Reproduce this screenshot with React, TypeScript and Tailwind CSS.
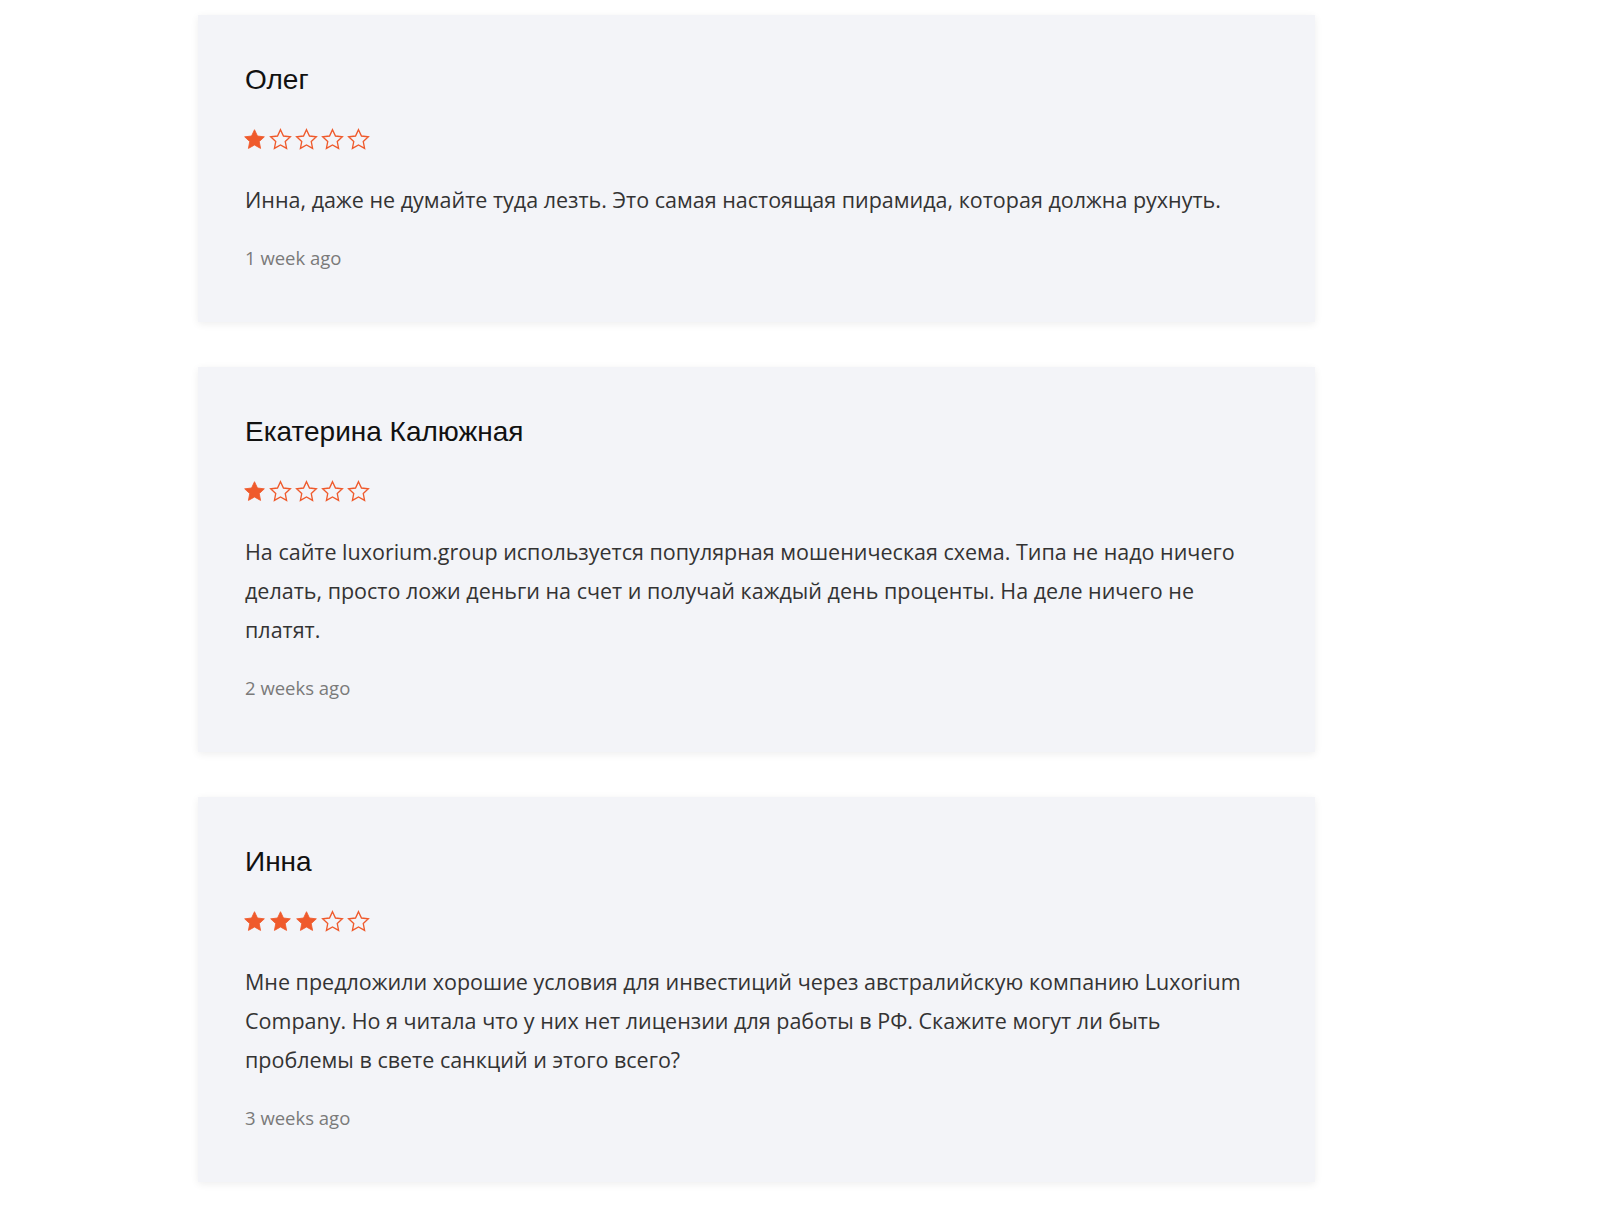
import React from 'react';

type Review = {
  name: string;
  rating: number;
  text: string;
  date: string;
};

const REVIEWS: Review[] = [
  {
    name: 'Олег',
    rating: 1,
    text: 'Инна, даже не думайте туда лезть. Это самая настоящая пирамида, которая должна рухнуть.',
    date: '1 week ago',
  },
  {
    name: 'Екатерина Калюжная',
    rating: 1,
    text: 'На сайте luxorium.group используется популярная мошеническая схема. Типа не надо ничего делать, просто ложи деньги на счет и получай каждый день проценты. На деле ничего не платят.',
    date: '2 weeks ago',
  },
  {
    name: 'Инна',
    rating: 3,
    text: 'Мне предложили хорошие условия для инвестиций через австралийскую компанию Luxorium Company. Но я читала что у них нет лицензии для работы в РФ. Скажите могут ли быть проблемы в свете санкций и этого всего?',
    date: '3 weeks ago',
  },
];

const STAR_PATH =
  'M12 2.6l2.85 6.05 6.6.8-4.88 4.55 1.27 6.55L12 17.3l-5.84 3.25 1.27-6.55-4.88-4.55 6.6-.8z';

function Star({ filled }: { filled: boolean }) {
  return (
    <svg viewBox="0 0 24 24" className="w-[25px] h-[25px]">
      <path
        d={STAR_PATH}
        fill={filled ? '#ef5a2c' : 'none'}
        stroke="#ef5a2c"
        strokeWidth={filled ? 0.8 : 1.3}
        strokeLinejoin="miter"
      />
    </svg>
  );
}

function ReviewCard({ review }: { review: Review }) {
  return (
    <div className="bg-[#f3f4f8] px-[47px] pt-[49px] pb-[50px] shadow-[0_2px_8px_rgba(0,0,0,0.07)]">
      <h3 className="text-[28px] leading-[32px] text-[#111] font-['Liberation_Sans',Arial,sans-serif]">
        {review.name}
      </h3>

      {/* Rating */}
      <div className="flex gap-[1px] mt-[31px] -ml-[3px]">
        {[0, 1, 2, 3, 4].map((i) => (
          <Star key={i} filled={i < review.rating} />
        ))}
      </div>

      <p className="mt-[28px] text-[21.5px] leading-[39px] text-[#333] font-['Open_Sans',sans-serif]">
        {review.text}
      </p>

      <p className="mt-[25px] text-[18.5px] leading-[28px] text-[#7a7a7a] font-['Open_Sans',sans-serif]">
        {review.date}
      </p>
    </div>
  );
}

export default function App() {
  return (
    <div className="min-h-[1226px] bg-white pt-[15px] pb-[46px]">
      <div className="ml-[198px] w-[1117px] flex flex-col gap-[45px]">
        {REVIEWS.map((r) => (
          <ReviewCard key={r.name} review={r} />
        ))}
      </div>
    </div>
  );
}
